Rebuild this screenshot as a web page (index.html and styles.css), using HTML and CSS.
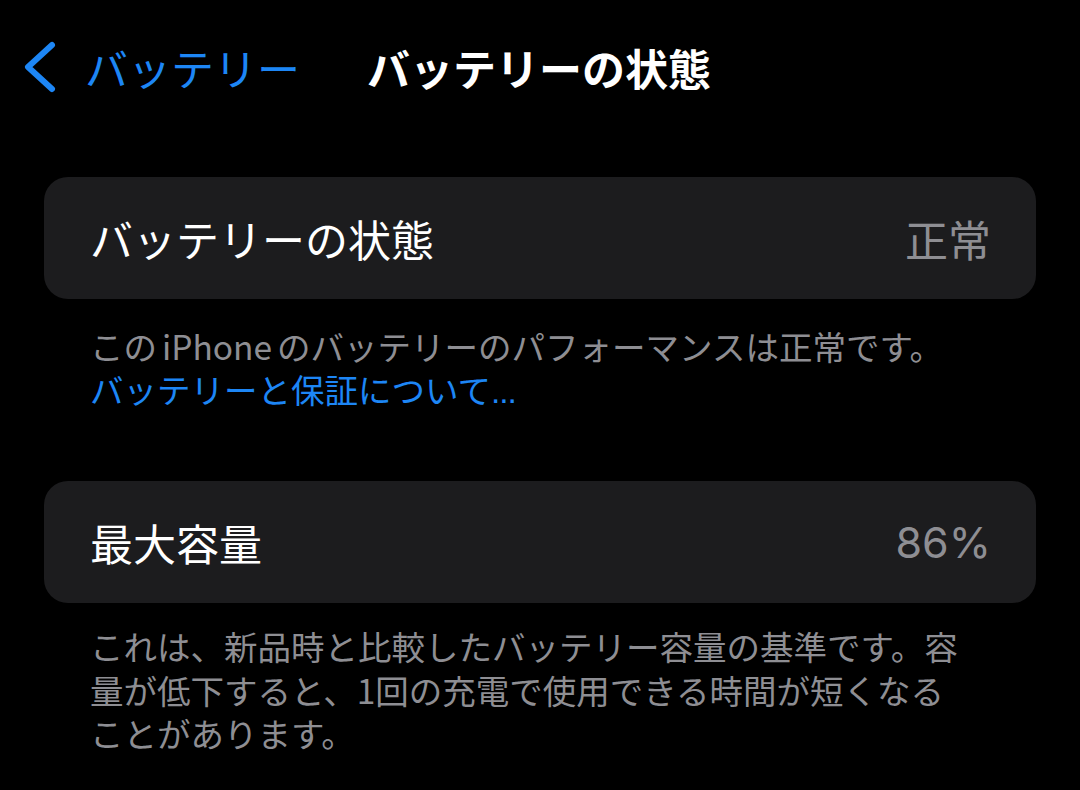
FILE: index.html
```html
<!DOCTYPE html>
<html lang="ja">
<head>
<meta charset="utf-8">
<title>バッテリーの状態</title>
<link rel="stylesheet" href="styles.css">
</head>
<body>
<header class="nav">
  <a class="back">
    <svg class="chev" width="36" height="54" viewBox="0 0 36 54"><path d="M30 5 L6 27 L30 49" fill="none" stroke="#1d86f5" stroke-width="6" stroke-linecap="round" stroke-linejoin="round"/></svg>
    <span class="back-label">バッテリー</span>
  </a>
  <h1 class="title">バッテリーの状態</h1>
</header>
<main class="content">
  <section class="card">
    <span class="label">バッテリーの状態</span>
    <span class="value">正常</span>
  </section>
  <p class="footer first">この<span class="latin">iPhone</span>のバッテリーのパフォーマンスは正常です。<br><span class="link">バッテリーと保証について<span class="dots">...</span></span></p>
  <section class="card second">
    <span class="label">最大容量</span>
    <span class="value num">86%</span>
  </section>
  <p class="footer second-footer">これは、新品時と比較したバッテリー容量の基準です。容量が低下すると、1回の充電で使用できる時間が短くなることがあります。</p>
</main>
</body>
</html>
```
FILE: styles.css
```css
html, body {
  margin: 0;
  padding: 0;
  background: #000;
}
body {
  width: 1080px;
  height: 790px;
  overflow: hidden;
  font-family: "Noto Sans CJK JP", "Noto Sans", sans-serif;
  color: #fff;
}
.nav {
  display: flex;
  align-items: center;
  height: 134px;
  padding-left: 22px;
}
.back {
  display: flex;
  align-items: center;
  color: #1d86f5;
}
.chev {
  display: block;
}
.back-label {
  margin-left: 27px;
  font-size: 43px;
  line-height: 1;
}
.title {
  margin: 0 0 0 67px;
  font-size: 43px;
  font-weight: 700;
  line-height: 1;
}
.content {
  padding: 43px 44px 0;
}
.card {
  display: flex;
  align-items: center;
  justify-content: space-between;
  height: 122px;
  padding: 0 45px 0 46px;
  background: #1c1c1e;
  border-radius: 24px;
}
.label {
  font-size: 43px;
  line-height: 1;
}
.value {
  font-size: 43px;
  line-height: 1;
  color: #8e8e93;
}
.value.num {
  font-family: Inter, "Noto Sans", sans-serif;
  font-size: 43px;
}
.footer {
  margin: 0;
  padding: 0 66px 0 46px;
  font-size: 33.5px;
  line-height: 43px;
  color: #8e8e93;
}
.footer.first {
  margin-top: 25px;
  margin-bottom: 68px;
}
.latin {
  margin: 0 5px;
}
.link {
  color: #1d86f5;
}
.dots {
  font-family: "Liberation Sans", sans-serif;
  letter-spacing: -1px;
}
.second-footer {
  margin-top: 21px;
  line-height: 43.5px;
}
```
